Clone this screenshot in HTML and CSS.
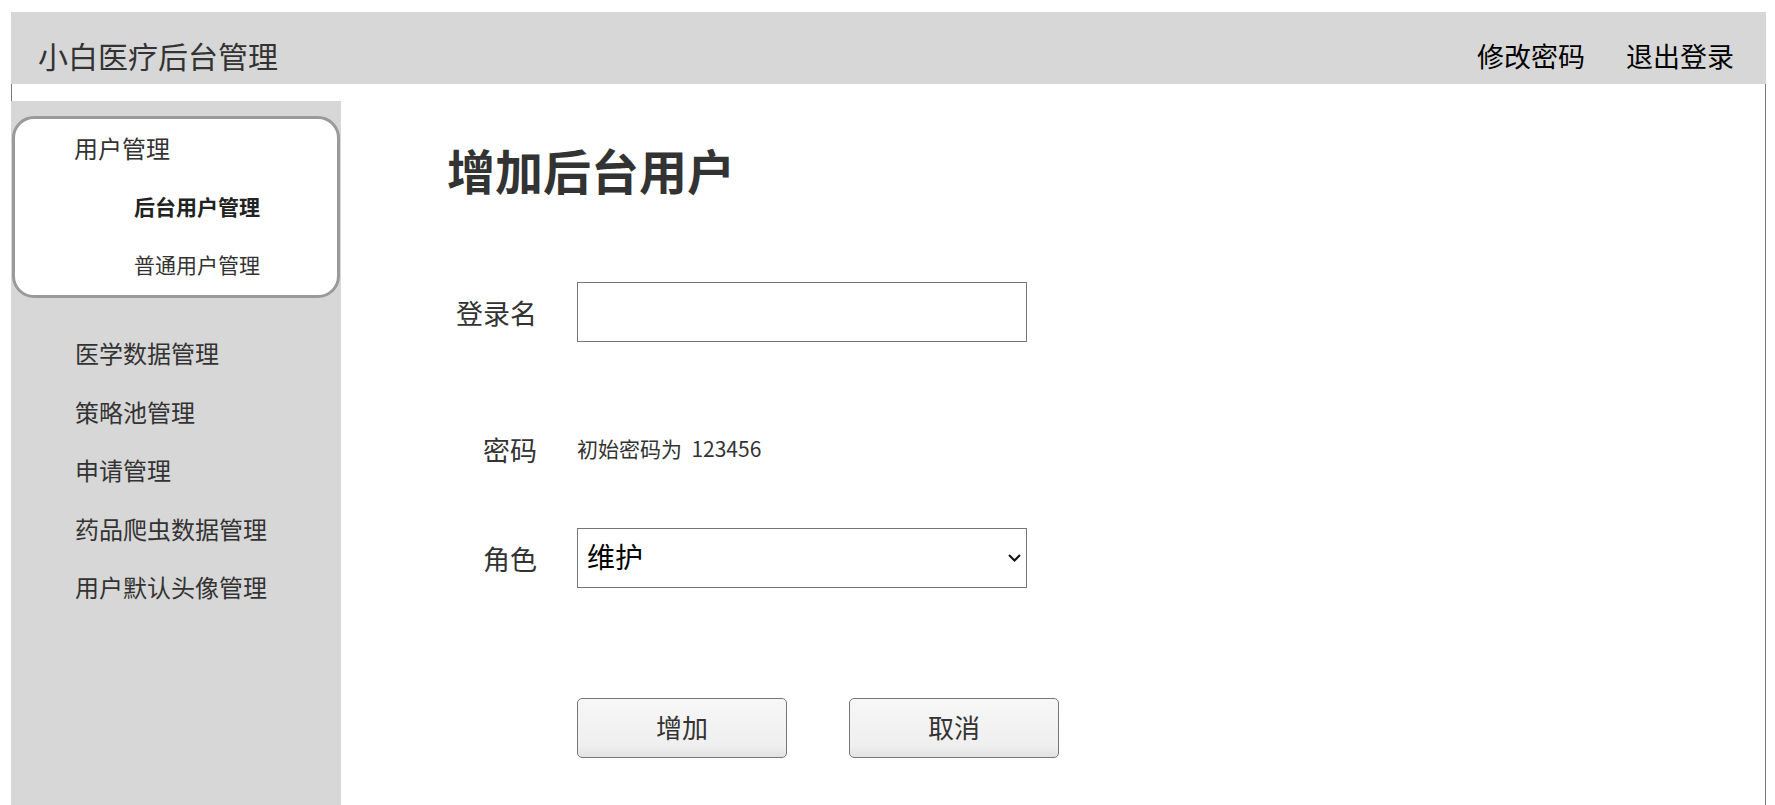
FILE: index.html
```html
<!DOCTYPE html>
<html lang="zh-CN">
<head>
<meta charset="utf-8">
<title>小白医疗后台管理</title>
<link rel="stylesheet" href="styles.css">
</head>
<body>
<header class="topbar">
  <div class="brand">小白医疗后台管理</div>
  <nav class="top-links">
    <a class="top-link">修改密码</a>
    <a class="top-link">退出登录</a>
  </nav>
</header>
<div class="frame">
  <aside class="sidebar">
    <div class="menu-group">
      <div class="group-title">用户管理</div>
      <div class="sub-item active">后台用户管理</div>
      <div class="sub-item">普通用户管理</div>
    </div>
    <div class="menu-list">
      <div class="menu-item">医学数据管理</div>
      <div class="menu-item">策略池管理</div>
      <div class="menu-item">申请管理</div>
      <div class="menu-item">药品爬虫数据管理</div>
      <div class="menu-item">用户默认头像管理</div>
    </div>
  </aside>
  <main class="content">
    <h1 class="page-title">增加后台用户</h1>
    <form class="form">
      <div class="row row-name">
        <label class="field-label">登录名</label>
        <input class="text-input" type="text">
      </div>
      <div class="row row-pass">
        <label class="field-label">密码</label>
        <span class="hint">初始密码为&nbsp; 123456</span>
      </div>
      <div class="row row-role">
        <label class="field-label">角色</label>
        <div class="select-wrap">
          <select class="select">
            <option>维护</option>
          </select>
          <svg class="chevron" width="13" height="8" viewBox="0 0 13 8"><path d="M1 1 L6.5 6.5 L12 1" fill="none" stroke="#111" stroke-width="2"/></svg>
        </div>
      </div>
      <div class="actions">
        <button class="btn" type="button">增加</button>
        <button class="btn" type="button">取消</button>
      </div>
    </form>
  </main>
</div>
</body>
</html>
```

FILE: styles.css
```css
* { box-sizing: border-box; }

html, body {
  margin: 0;
  background: #fff;
}

body {
  padding: 12px 9px 0 11px;
  font-family: "Noto Sans CJK SC", "Noto Sans", sans-serif;
  color: #333;
  overflow: hidden;
}

.topbar {
  height: 72px;
  background: #d7d7d7;
  display: flex;
  align-items: center;
  justify-content: space-between;
  padding: 14px 32px 0 27px;
}

.brand {
  font-size: 30px;
  color: #333;
  line-height: 1;
}

.top-links {
  display: flex;
  gap: 41px;
}

.top-link {
  font-size: 27px;
  color: #000;
  line-height: 1;
}

.frame {
  display: flex;
  border-left: 1px solid #7a7a7a;
  border-right: 1px solid #7a7a7a;
  padding-top: 17px;
  min-height: 721px;
}

.sidebar {
  width: 330px;
  flex: none;
  margin-left: -1px;
  background: #d7d7d7;
  padding-top: 15px;
  min-height: 704px;
}

.menu-group {
  margin: 0 1px;
  background: #fff;
  border: 3px solid #9a9a9a;
  border-radius: 22px;
  padding-bottom: 2px;
}

.group-title {
  height: 58px;
  line-height: 58px;
  padding-left: 59px;
  font-size: 24px;
  color: #333;
}

.sub-item {
  height: 58px;
  line-height: 58px;
  padding-left: 119px;
  font-size: 21px;
  color: #333;
}

.sub-item.active {
  font-weight: bold;
  color: #222;
}

.menu-list {
  margin-top: 26px;
}

.menu-item {
  height: 58.5px;
  line-height: 58.5px;
  padding-left: 64px;
  font-size: 24px;
  color: #333;
}

.content {
  flex: 1;
  padding-left: 106px;
  padding-top: 38px;
}

.page-title {
  margin: 0;
  height: 62px;
  line-height: 60px;
  font-size: 48px;
  font-weight: bold;
  color: #333;
}

.form {
  margin: 0;
}

.row {
  display: flex;
  align-items: center;
  gap: 40px;
}

.row-name {
  margin-top: 81px;
  height: 60px;
}

.row-pass {
  margin-top: 87px;
  height: 40px;
}

.row-role {
  margin-top: 59px;
  height: 60px;
}

.field-label {
  width: 90px;
  flex: none;
  text-align: right;
  font-size: 27px;
  color: #333;
  padding-top: 1px;
}

.text-input {
  width: 450px;
  height: 60px;
  border: 1px solid #767676;
  border-radius: 0;
  background: #fff;
  margin: 0;
  outline: none;
}

.hint {
  font-size: 21px;
  color: #333;
  margin-top: -3px;
}

.select-wrap {
  position: relative;
  width: 450px;
  height: 60px;
}

.select {
  appearance: none;
  -webkit-appearance: none;
  width: 100%;
  height: 100%;
  border: 1px solid #767676;
  border-radius: 0;
  background: #fff;
  margin: 0;
  padding: 0 0 4px 9px;
  font-family: "Noto Sans CJK SC", sans-serif;
  font-size: 28px;
  color: #000;
  outline: none;
}

.chevron {
  position: absolute;
  right: 6px;
  top: 26px;
  pointer-events: none;
}

.actions {
  display: flex;
  gap: 62px;
  margin-top: 110px;
  padding-left: 130px;
}

.btn {
  width: 210px;
  height: 60px;
  border: 1px solid #777;
  border-radius: 5px;
  background: linear-gradient(#f7f7f7, #efefef 80%, #e2e2e2);
  font-family: "Noto Sans CJK SC", sans-serif;
  font-size: 26px;
  color: #333;
  padding: 0 0 3px 0;
}
```
